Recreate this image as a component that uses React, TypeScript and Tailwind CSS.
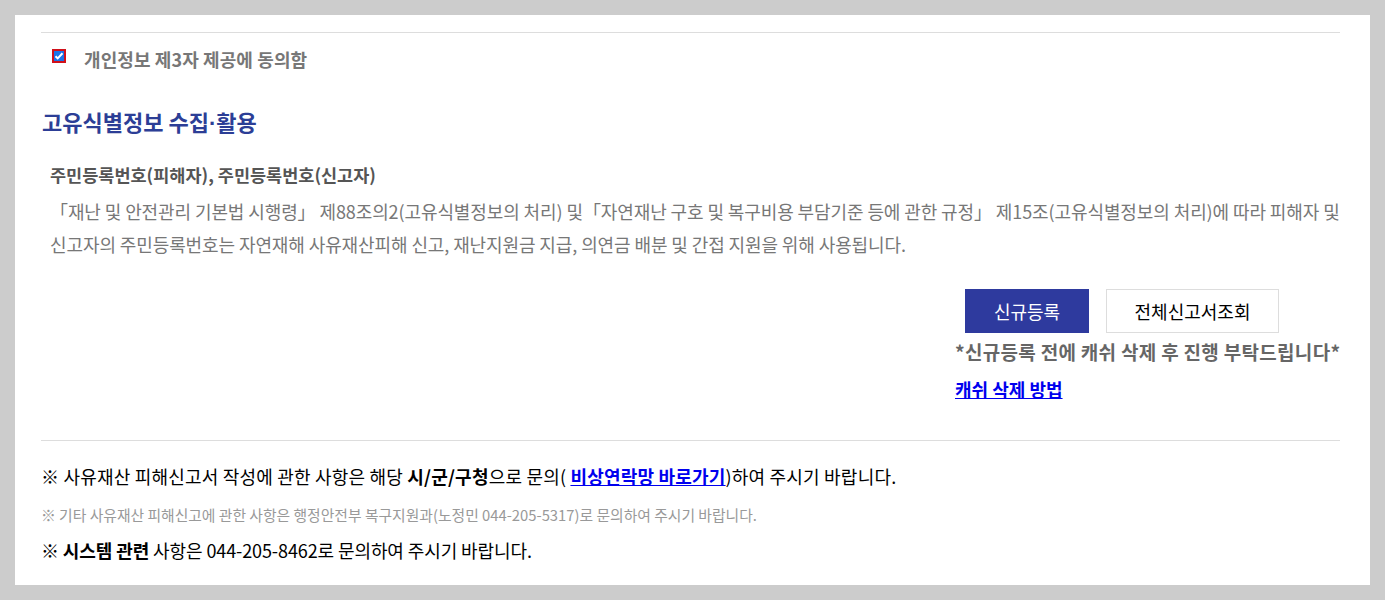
export default function App() {
  return (
    <div
      className="min-h-[600px] bg-[#cccccc] p-[15px]"
      style={{ fontFamily: '"Noto Sans CJK KR", "Noto Sans", sans-serif' }}
    >
      <div className="h-[570px] bg-white pl-[26px] pr-[30px] pt-[17px]">
        {/* agree */}
        <div className="border-t border-[#dddddd] pt-[13px]">
          <label className="flex items-center pl-[11px]">
            <span className="-mt-[6px] flex h-[14px] w-[14px] items-center justify-center border-2 border-[#d0101a] bg-[#1a73e8]">
              <svg className="h-[10px] w-[10px]" viewBox="0 0 10 10" fill="none">
                <path d="M1.5 5.2l2.2 2.2L8.5 2.2" stroke="#ffffff" strokeWidth={2} />
              </svg>
            </span>
            <span className="ml-[18px] text-[18px] font-bold leading-[26px] tracking-[0.1px] text-[#777777]">
              개인정보 제3자 제공에 동의함
            </span>
          </label>
        </div>

        {/* unique id info */}
        <h2 className="mt-[34px] pl-[1px] text-[22px] font-bold leading-[30px] text-[#2c3e96]">
          고유식별정보 수집<span style={{ fontFamily: '"Liberation Sans", sans-serif' }}>·</span>활용
        </h2>
        <div className="mt-[23px] pl-[9px]">
          <p className="text-[17.5px] font-bold leading-[26px] text-[#555555]">
            주민등록번호(피해자), 주민등록번호(신고자)
          </p>
          <p className="mt-[7px] break-keep text-[18px] leading-[33px] tracking-[-0.1px] text-[#777777]">
            「재난 및 안전관리 기본법 시행령」 제88조의2(고유식별정보의 처리) 및「자연재난 구호 및 복구비용 부담기준 등에 관한 규정」 제15조(고유식별정보의 처리)에 따라 피해자 및 신고자의 주민등록번호는 자연재해 사유재산피해 신고, 재난지원금 지급, 의연금 배분 및 간접 지원을 위해 사용됩니다.
          </p>
        </div>

        {/* buttons */}
        <div className="mt-[28px] flex justify-end">
          <div className="flex w-[385px] flex-col">
            <div className="flex gap-[17px] pl-[10px]">
              <button className="h-[44px] w-[124px] bg-[#2e3a9e] text-[18px] text-white">
                신규등록
              </button>
              <button className="h-[44px] w-[173px] border border-[#dddddd] bg-white text-[18px] text-black">
                전체신고서조회
              </button>
            </div>
            <p className="mt-[5px] whitespace-nowrap text-[19px] font-bold leading-[28px] tracking-[0.3px] text-[#666666]">
              *신규등록 전에 캐쉬 삭제 후 진행 부탁드립니다*
            </p>
            <a href="#" className="mt-[10px] text-[18px] font-bold leading-[26px] text-[#0000ee] underline">
              캐쉬 삭제 방법
            </a>
          </div>
        </div>

        {/* notices */}
        <div className="mt-[38px] border-t border-[#dddddd] pt-[20px]">
          <p className="text-[18px] leading-[30px] tracking-[0.2px] text-black">
            ※ 사유재산 피해신고서 작성에 관한 사항은 해당 <b>시/군/구청</b>으로 문의({' '}
            <a href="#" className="font-bold text-[#0000ee] underline">
              비상연락망 바로가기
            </a>
            )하여 주시기 바랍니다.
          </p>
          <p className="mt-[13px] text-[14.8px] leading-[22px] text-[#999999]">
            ※ 기타 사유재산 피해신고에 관한 사항은 행정안전부 복구지원과(노정민 044-205-5317)로 문의하여 주시기 바랍니다.
          </p>
          <p className="mt-[9px] text-[18px] leading-[30px] tracking-[-0.1px] text-black">
            ※ <b>시스템 관련</b> 사항은 044-205-8462로 문의하여 주시기 바랍니다.
          </p>
        </div>
      </div>
    </div>
  )
}
